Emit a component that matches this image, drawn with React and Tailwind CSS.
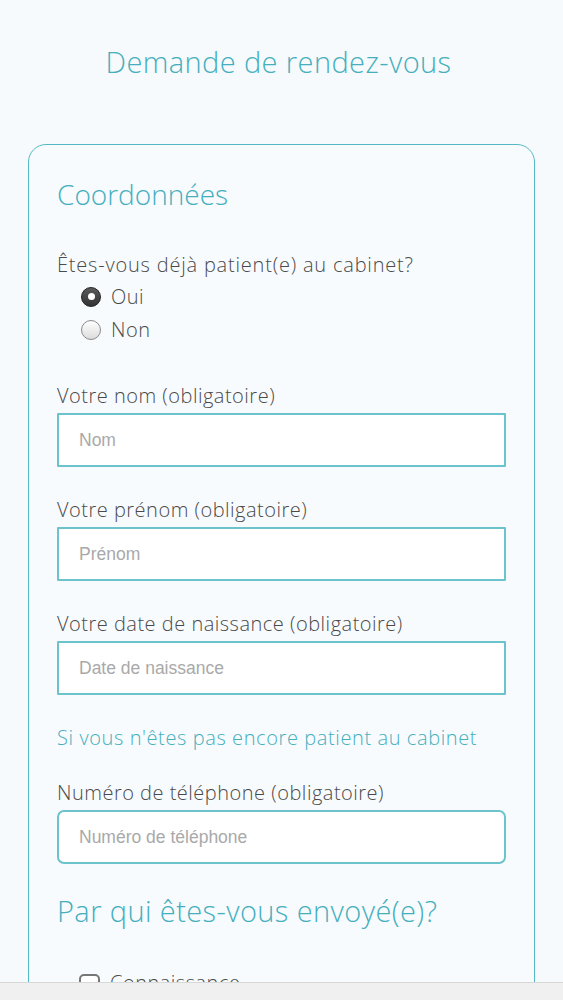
import React from "react";

const teal = "text-[#45afbd]";

const Field = ({ label, placeholder, rounded, top = "mt-[30px]" }) => (
  <div className={top}>
    <label className="block text-[20px] tracking-[0.5px] leading-[26px] text-[#4a4a4a]">{label}</label>
    <div
      className={`mt-[4px] h-[54px] border-2 border-[#6cc3cc] bg-white flex items-center px-[20px] ${
        rounded ? "rounded-[7px]" : "rounded-[1px]"
      }`}
    >
      <span className="font-['Liberation_Sans',Arial,sans-serif] text-[17.5px] text-[#a9a9a9]">
        {placeholder}
      </span>
    </div>
  </div>
);

const Radio = ({ checked, label }) => (
  <div className="flex items-center h-[33px] pl-[24px]">
    {checked ? (
      <span className="w-[20px] h-[20px] rounded-full bg-gradient-to-b from-[#5a5a5a] to-[#333] border border-[#222] flex items-center justify-center">
        <span className="w-[7px] h-[7px] rounded-full bg-white" />
      </span>
    ) : (
      <span className="w-[20px] h-[20px] rounded-full bg-gradient-to-b from-white to-[#dcdcdc] border border-[#8a8a8a]" />
    )}
    <span className="ml-[10px] text-[20px] tracking-[0.5px] text-[#4a4a4a]">{label}</span>
  </div>
);

export default function App() {
  return (
    <div className="min-h-screen bg-[#f6fafc] font-['Open_Sans','Noto_Sans',sans-serif] font-light overflow-hidden h-[1000px] relative">
      <h1 className={`pt-[43px] pr-[6px] text-center text-[29px] tracking-[0.4px] leading-[38px] ${teal}`}>
        Demande de rendez-vous
      </h1>

      <div className="mx-[28px] mt-[63px] border-[1.5px] border-[#55b9c4] rounded-[18px] px-[28px] pt-[30px] pb-[40px] bg-[#f8fbfd]">
        <h2 className={`text-[28px] leading-[38px] ${teal}`}>Coordonnées</h2>

        <p className="mt-[39px] text-[20px] tracking-[0.8px] leading-[26px] text-[#4a4a4a]">
          Êtes-vous déjà patient(e) au cabinet?
        </p>
        <div className="mt-[2px]">
          <Radio checked label="Oui" />
          <Radio label="Non" />
        </div>

        <Field top="mt-[37px]" label="Votre nom (obligatoire)" placeholder="Nom" />
        <Field label="Votre prénom (obligatoire)" placeholder="Prénom" />
        <Field label="Votre date de naissance (obligatoire)" placeholder="Date de naissance" />

        <p className={`mt-[30px] text-[20px] tracking-[0.6px] leading-[26px] ${teal}`}>
          Si vous n'êtes pas encore patient au cabinet
        </p>
        <Field top="mt-[29px]" label="Numéro de téléphone (obligatoire)" placeholder="Numéro de téléphone" rounded />

        <h2 className={`mt-[28px] text-[29px] tracking-[0.4px] leading-[38px] ${teal}`}>
          Par qui êtes-vous envoyé(e)?
        </h2>

        <div className="mt-[38px] flex items-center pl-[22px]">
          <span className="w-[21px] h-[18px] rounded-[5px] border-2 border-[#777] bg-white" />
          <span className="ml-[10px] text-[20px] tracking-[0.5px] text-[#4a4a4a]">Connaissance</span>
        </div>
      </div>

      <div className="absolute left-0 right-0 top-[982px] h-[18px] bg-[#f0f0f0] border-t border-[#d8d8d8]" />
    </div>
  );
}
